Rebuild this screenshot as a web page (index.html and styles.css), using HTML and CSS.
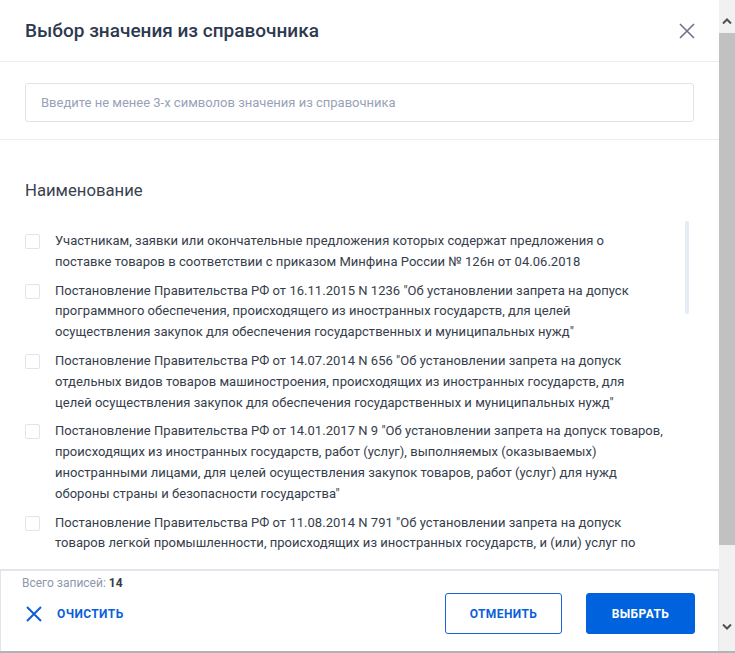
FILE: index.html
```html
<!DOCTYPE html>
<html lang="ru">
<head>
    <meta charset="UTF-8">
    <meta name="viewport" content="width=device-width, initial-scale=1.0">
    <title>Выбор значения из справочника</title>
    <link rel="stylesheet" href="styles.css">
</head>
<body>

<div class="page">
    <div class="modal">
        <div class="modal-header">
            <h2 class="modal-title">Выбор значения из справочника</h2>
            <button class="close-btn" aria-label="Закрыть">
                <svg width="16" height="16" viewBox="0 0 16 16"><path d="M1 1 L15 15 M15 1 L1 15" stroke="#6b7386" stroke-width="1.6" fill="none"/></svg>
            </button>
        </div>

        <div class="search-group">
            <input type="text" class="search-input" placeholder="Введите не менее 3-х символов значения из справочника">
        </div>

        <div class="modal-body">
            <div class="column-title">Наименование</div>
            <div class="list">
                <div class="list-item">
                    <span class="checkbox"></span>
                    <span class="item-text">Участникам, заявки или окончательные предложения которых содержат предложения о<br>поставке товаров в соответствии с приказом Минфина России № 126н от 04.06.2018</span>
                </div>
                <div class="list-item">
                    <span class="checkbox"></span>
                    <span class="item-text">Постановление Правительства РФ от 16.11.2015 N 1236 "Об установлении запрета на допуск программного обеспечения, происходящего из иностранных государств, для целей осуществления закупок для обеспечения государственных и муниципальных нужд"</span>
                </div>
                <div class="list-item">
                    <span class="checkbox"></span>
                    <span class="item-text">Постановление Правительства РФ от 14.07.2014 N 656 "Об установлении запрета на допуск отдельных видов товаров машиностроения, происходящих из иностранных государств, для<br>целей осуществления закупок для обеспечения государственных и муниципальных нужд"</span>
                </div>
                <div class="list-item">
                    <span class="checkbox"></span>
                    <span class="item-text">Постановление Правительства РФ от 14.01.2017 N 9 "Об установлении запрета на допуск товаров, происходящих из иностранных государств, работ (услуг), выполняемых (оказываемых) иностранными лицами, для целей осуществления закупок товаров, работ (услуг) для нужд обороны страны и безопасности государства"</span>
                </div>
                <div class="list-item">
                    <span class="checkbox"></span>
                    <span class="item-text">Постановление Правительства РФ от 11.08.2014 N 791 "Об установлении запрета на допуск товаров легкой промышленности, происходящих из иностранных государств, и (или) услуг по осуществлению закупок для обеспечения федеральных нужд"</span>
                </div>
                <div class="list-thumb"></div>
            </div>
        </div>

        <div class="modal-footer">
            <div class="total">Всего записей: <strong>14</strong></div>
            <div class="footer-row">
                <button class="clear-btn">
                    <svg width="16" height="16" viewBox="0 0 16 16"><path d="M1 1 L15 15 M15 1 L1 15" stroke="#0b5fd8" stroke-width="2" fill="none"/></svg>
                    <span>Очистить</span>
                </button>
                <div class="actions">
                    <button class="btn btn-outline">Отменить</button>
                    <button class="btn btn-primary">Выбрать</button>
                </div>
            </div>
        </div>
    </div>

    <div class="page-scroll">
        <div class="scroll-btn scroll-up">
            <svg width="10" height="6" viewBox="0 0 10 6"><path d="M1 5.5 L5 1.5 L9 5.5" stroke="#505050" stroke-width="2" fill="none"/></svg>
        </div>
        <div class="scroll-track">
            <div class="scroll-thumb"></div>
        </div>
        <div class="scroll-btn scroll-down">
            <svg width="10" height="6" viewBox="0 0 10 6"><path d="M1 0.5 L5 4.5 L9 0.5" stroke="#505050" stroke-width="2" fill="none"/></svg>
        </div>
    </div>
</div>
<div class="page-edge"></div>

</body>
</html>
```

FILE: styles.css
```css
        * {
            box-sizing: border-box;
        }

        body {
            margin: 0;
            font-family: Roboto, "Noto Sans", sans-serif;
            background: #fff;
            overflow: hidden;
        }

        .page {
            display: flex;
            height: 651px;
        }

        .page-edge {
            height: 2px;
            background: #b2b2ba;
        }

        .modal {
            flex: 1;
            display: flex;
            flex-direction: column;
            min-width: 0;
        }

        .modal-header {
            height: 62px;
            padding: 0 25px;
            display: flex;
            align-items: center;
            justify-content: space-between;
            border-bottom: 1px solid #e9ecf1;
            flex-shrink: 0;
        }

        .modal-title {
            margin: 0;
            font-size: 19px;
            font-weight: 500;
            color: #2e3950;
        }

        .close-btn {
            border: 0;
            background: none;
            padding: 0;
            margin-right: -1px;
            display: flex;
        }

        .search-group {
            padding: 21px 25px 17px;
            border-bottom: 1px solid #e9ecf1;
            flex-shrink: 0;
        }

        .search-input {
            width: 100%;
            height: 39px;
            border: 1px solid #dde4ed;
            border-radius: 3px;
            padding: 0 15px;
            font-family: inherit;
            font-size: 13px;
            color: #333;
        }

        .search-input::placeholder {
            color: #97a2b7;
        }

        .modal-body {
            flex: 1;
            min-height: 0;
            display: flex;
            flex-direction: column;
            padding: 41px 25px 13px;
        }

        .column-title {
            font-size: 16.7px;
            line-height: 20px;
            color: #39414f;
            margin-bottom: 19px;
        }

        .list {
            position: relative;
            flex: 1;
            min-height: 0;
            overflow: hidden;
            padding: 11px 29.5px 0 0;
        }

        .list-item {
            display: flex;
            gap: 15px;
            margin-bottom: 8px;
        }

        .checkbox {
            flex-shrink: 0;
            width: 15px;
            height: 15px;
            margin-top: 3px;
            border: 1px solid #dfe5ee;
            border-radius: 2px;
            background: #fff;
        }

        .item-text {
            font-size: 13px;
            line-height: 20.8px;
            letter-spacing: 0.03px;
            color: #363d4b;
        }

        .list-thumb {
            position: absolute;
            top: 1px;
            right: 5px;
            width: 4px;
            height: 93px;
            border-radius: 2px;
            background: #e5ecf5;
        }

        .modal-footer {
            flex-shrink: 0;
            border: 1px solid #e4e4ee;
            border-top-width: 2px;
            border-bottom: 0;
            padding: 5px 23px 17px 21px;
        }

        .total {
            font-size: 12px;
            line-height: 14px;
            color: #8d98ad;
        }

        .total strong {
            color: #353b47;
            font-weight: 700;
        }

        .footer-row {
            margin-top: 3px;
            display: flex;
            align-items: center;
            justify-content: space-between;
        }

        .clear-btn {
            border: 0;
            background: none;
            padding: 0;
            margin-left: 4px;
            display: flex;
            align-items: center;
            gap: 15px;
            font-family: inherit;
            font-size: 12px;
            font-weight: 700;
            letter-spacing: 0.4px;
            text-transform: uppercase;
            color: #0b5fd8;
        }

        .actions {
            display: flex;
            gap: 24px;
        }

        .btn {
            height: 41px;
            border-radius: 3px;
            font-family: inherit;
            font-size: 12px;
            font-weight: 700;
            letter-spacing: 0.4px;
            text-transform: uppercase;
        }

        .btn-outline {
            width: 117px;
            border: 1px solid #1664d8;
            background: #fff;
            color: #0b5fd8;
        }

        .btn-primary {
            width: 109px;
            border: 1px solid #0062dc;
            background: #0062dc;
            color: #fff;
        }

        .page-scroll {
            width: 16px;
            flex-shrink: 0;
            background: #f1f1f1;
            display: flex;
            flex-direction: column;
        }

        .scroll-btn {
            display: flex;
            justify-content: center;
        }

        .scroll-up {
            height: 33px;
            padding-top: 18px;
        }

        .scroll-track {
            flex: 1;
        }

        .scroll-thumb {
            height: 512px;
            background: #c1c1c1;
        }

        .scroll-down {
            height: 33px;
            padding-top: 6px;
        }
```
